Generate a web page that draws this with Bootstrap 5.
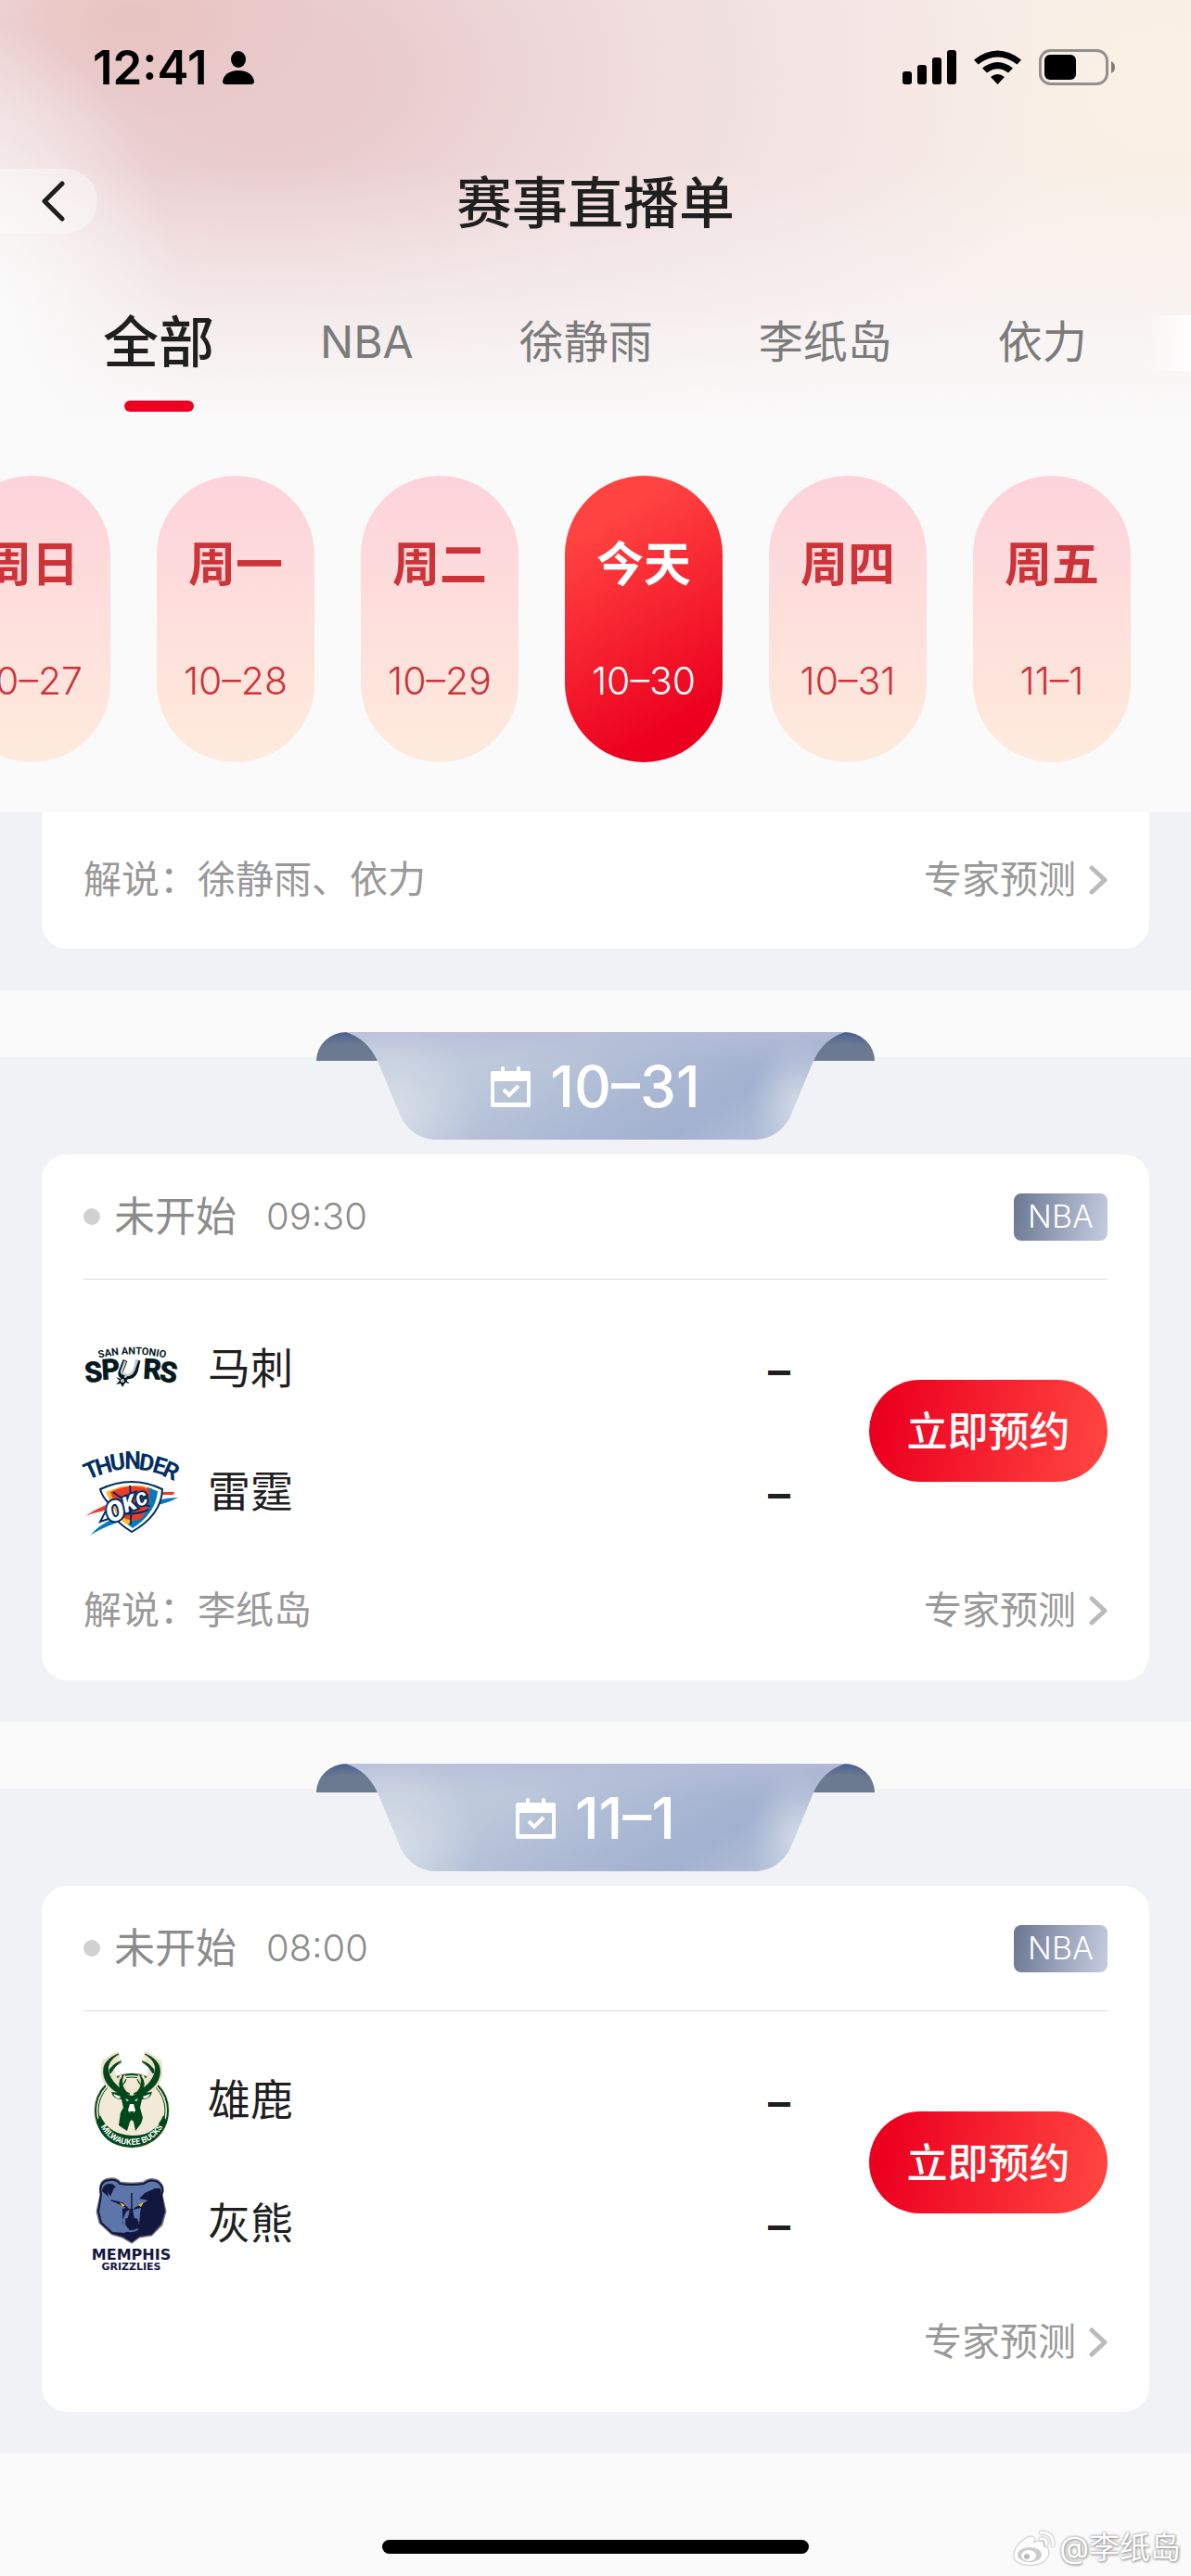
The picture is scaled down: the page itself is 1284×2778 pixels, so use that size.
<!DOCTYPE html>
<html lang="zh-CN">
<head>
<meta charset="utf-8">
<meta name="viewport" content="width=device-width, initial-scale=1">
<title>赛事直播单</title>
<link rel="stylesheet" href="https://cdn.jsdelivr.net/npm/bootstrap@5.3.0/dist/css/bootstrap.min.css">
<style>
  body { background: #fafafa; color: #1f1f1f; font-family: Inter, "Noto Sans CJK SC", sans-serif; line-height: 1.2; }
  a { text-decoration: none; color: inherit; }
  .app-head {
    height: 445px;
    background:
      linear-gradient(to bottom, rgba(250,250,250,0) 40%, rgba(250,250,250,.4) 72%, rgba(250,250,250,.9) 100%),
      radial-gradient(ellipse 20% 85% at -4% 88%, #fafafa 25%, rgba(250,250,250,0) 100%),
      radial-gradient(ellipse 16% 26% at 11% 4%, rgba(232,194,190,.9), rgba(232,194,190,0)),
      radial-gradient(ellipse 66% 125% at 22% 18%, #e9cbcd 14%, rgba(238,216,217,.75) 48%, rgba(246,236,234,0) 100%),
      radial-gradient(ellipse 34% 80% at 98% 22%, #faf0e4 10%, rgba(250,243,235,0) 100%),
      #f6eceb;
  }
  .status-row { height: 146px; padding: 0 82px 0 100px; color: #000; }
  .clock { font-size: 51px; font-weight: 600; }
  .title-row { height: 145px; }
  .title-row h1 { font-size: 60px; font-weight: 500; }
  .back-btn { width: 105px; height: 70px; border-radius: 0 35px 35px 0; background: rgba(255,255,255,.38); padding-left: 43px; left: 0; top: 36px; }
  .tab-row { height: 154px; padding: 0 54px; font-size: 48px; color: #7b7b7b; }
  .tab-row a { padding: 0 57px; height: 156px; }
  .tab-row .now { font-size: 60px; font-weight: 500; color: #1f1f1f; }
  .tab-row .now::after { content: ""; position: absolute; width: 75px; height: 12px; border-radius: 6px; background: #ee0022; left: calc(50% - 37px); bottom: 3px; }
  .tab-fade { width: 48px; height: 60px; right: 0; top: 49px; background: linear-gradient(to right, rgba(255,255,255,0), #fff); }
  .day-row { padding: 68px 0 54px; gap: 50px; margin-left: -51px; }
  .day { width: 170px; height: 309px; border: 0; border-radius: 85px; padding: 65px 0 0; gap: 71px; background: linear-gradient(#fdd3db, #feebdc); color: #cd3439; }
  .day b { font-size: 51px; font-weight: 700; }
  .day span { font-size: 41px; font-weight: 300; }
  .day.today { background: linear-gradient(150deg, #ff4340 18%, #ec001f 84%); color: #fff; }
  .grey-band { background: #f1f2f6; padding: 0 45px 45px; }
  .match-day { background: linear-gradient(#fafafa 72px, #f1f2f6 72px); padding: 45px; }
  .ribbon { width: 602px; height: 116px; margin-bottom: 16px; gap: 21px; padding-top: 2px; color: #fff; font-size: 62px; font-weight: 500; }
  .ribbon .shape { position: absolute; inset: 0; }
  .game { background: #fff; border-radius: 27px; padding: 0 45px; }
  .game.cut { border-radius: 0 0 27px 27px; padding-bottom: 4px; }
  .game-top { height: 135px; border-bottom: 1px solid #dedede; font-size: 44px; color: #8c8c8c; }
  .dot { width: 18px; height: 18px; background: #d1d1d1; margin-right: 15px; }
  .time { margin-left: 32px; font-size: 40px; font-weight: 300; }
  .league { width: 101px; height: 51px; border-radius: 8px; background: linear-gradient(100deg, #6a7792, #c5cde0); color: #fff; font-size: 34px; font-weight: 300; }
  .game-mid { padding-top: 45px; }
  .team { height: 102px; font-size: 46px; gap: 32px; }
  .team svg { overflow: visible; }
  .score { font-weight: 600; font-size: 48px; padding-top: 4px; }
  .teams { gap: 31px; }
  .book { width: 257px; height: 110px; margin-left: 85px; padding-top: 4px; border: 0; border-radius: 55px; background: linear-gradient(100deg, #ec001f 8%, #ff4340 94%); color: #fff; font-size: 44px; font-weight: 500; }
  .game-foot { height: 152px; padding-top: 2px; font-size: 41px; color: #999; }
  .cut .game-foot { height: 143px; }
  .game-foot a { gap: 14px; }
  .home { padding: 93px 0 24px; }
  .home-bar { width: 460px; height: 15px; background: #000; border-radius: 8px; }
  .mark-by { right: 11px; bottom: 10px; font-size: 33px; gap: 4px; color: #fff; text-shadow: 0 0 3px #888, 1px 1px 3px #999; }
  .mark-by svg { filter: drop-shadow(0 0 1px #888); }
</style>
</head>
<body>
<svg width="0" height="0" class="position-absolute" aria-hidden="true">
  <defs>
    <linearGradient id="gRib" x1="0" y1="0" x2="1" y2=".3">
      <stop offset="0" stop-color="#cbd3e1"/><stop offset=".4" stop-color="#bcc8da"/><stop offset=".7" stop-color="#a9b7d3"/><stop offset=".85" stop-color="#a2b1cf"/><stop offset="1" stop-color="#b0bdd8"/>
    </linearGradient>
    <linearGradient id="gTop" x1="0" y1="0" x2="0" y2="1"><stop offset="0" stop-color="#b6bcd8" stop-opacity=".75"/><stop offset=".3" stop-color="#b6bcd8" stop-opacity="0"/></linearGradient>
    <radialGradient id="gGlow"><stop offset="0" stop-color="#dde3eb" stop-opacity=".8"/><stop offset=".5" stop-color="#dde3eb" stop-opacity=".35"/><stop offset="1" stop-color="#dde3eb" stop-opacity="0"/></radialGradient>
    <radialGradient id="gEar" cx=".5" cy="1" r="1"><stop offset=".6" stop-color="#6b7a90"/><stop offset="1" stop-color="#4a5f91"/></radialGradient>
    <clipPath id="cRib"><path d="M32 0H570C555 5 544 14 536 31L510 93Q498 114 475 116H127Q104 114 92 93L66 31C58 14 47 5 32 0Z"/></clipPath>
  </defs>
  <symbol id="ribbon" viewBox="0 0 602 116">
    <path d="M0 31A33 31 0 0 1 66 31Z" fill="url(#gEar)"/><path d="M536 31A33 31 0 0 1 602 31Z" fill="url(#gEar)"/>
    <g clip-path="url(#cRib)"><rect width="602" height="116" fill="url(#gRib)"/><rect width="602" height="116" fill="url(#gTop)"/><ellipse cx="85" cy="85" rx="90" ry="90" fill="url(#gGlow)"/><ellipse cx="520" cy="80" rx="52" ry="75" fill="url(#gGlow)"/></g>
  </symbol>
  <symbol id="cal" viewBox="0 0 43 44">
    <path fill="#fff" fill-rule="evenodd" d="M2 5H11V1Q13 -1 15 1V5H28V1Q30 -1 32 1V5H41Q43 5 43 7V42Q43 44 41 44H2Q0 44 0 42V7Q0 5 2 5ZM4 16V39H39V16Z"/>
    <path d="M14 25L20 31L30 21" fill="none" stroke="#fff" stroke-width="4"/>
  </symbol>
  <symbol id="more" viewBox="0 0 20 32"><path d="M3 3L17 16L3 29" fill="none" stroke="#bbb" stroke-width="5" stroke-linecap="round" stroke-linejoin="round"/></symbol>
</svg>

<header class="app-head">
  <div class="status-row d-flex align-items-center justify-content-between">
    <div class="d-flex align-items-center gap-3"><span class="clock">12:41</span>
      <svg width="34" height="36" viewBox="0 0 34 36"><ellipse cx="17" cy="9" rx="8" ry="9"/><path d="M0 33C1 25 8 21 17 21S33 25 34 33Q34 36 30 36H4Q0 36 0 33Z"/></svg>
    </div>
    <div class="d-flex align-items-center">
      <svg width="229" height="40" viewBox="0 0 229 40">
        <rect x="0" y="24" width="10" height="14" rx="3"/><rect x="16" y="17" width="10" height="21" rx="3"/><rect x="32" y="9" width="10" height="29" rx="3"/><rect x="48" y="1" width="10" height="37" rx="3"/>
        <path d="M77 11.500Q102.500 -8.500 128 11.500L123.500 16.500Q102.500 .5 81.500 16.500Z"/><path d="M86 20.500Q102.500 7.500 119 20.500L114 25.500Q102.500 17 91 25.500Z"/><path d="M95 30Q102.500 24 110 30L102.500 38Z"/>
        <rect x="148.500" y="1.500" width="72" height="36" rx="11" fill="none" stroke="#958f8a" stroke-width="3"/><rect x="153" y="6" width="34" height="27" rx="6"/><path d="M225 13Q229 15 229 19.500T225 26Z" fill="#827c78"/>
      </svg>
    </div>
  </div>
  <div class="title-row position-relative d-flex align-items-center justify-content-center">
    <button class="btn back-btn position-absolute d-flex align-items-center" aria-label="返回"><svg width="26" height="44" viewBox="0 0 26 44"><path d="M23 3L4 22L23 41" fill="none" stroke="#1f1f1f" stroke-width="5" stroke-linecap="round" stroke-linejoin="round"/></svg></button>
    <h1 class="m-0">赛事直播单</h1>
  </div>
  <nav class="tab-row position-relative d-flex text-nowrap overflow-hidden">
    <a href="#all" class="now position-relative d-flex align-items-center">全部</a>
    <a href="#nba" class="d-flex align-items-center">NBA</a>
    <a href="#xjy" class="d-flex align-items-center">徐静雨</a>
    <a href="#lzd" class="d-flex align-items-center">李纸岛</a>
    <a href="#yl" class="d-flex align-items-center">依力</a>
    <div class="tab-fade position-absolute"></div>
  </nav>
</header>

<div class="overflow-hidden">
  <div class="day-row d-flex">
    <button class="day flex-shrink-0 d-flex flex-column align-items-center"><b>周日</b><span>10–27</span></button>
    <button class="day flex-shrink-0 d-flex flex-column align-items-center"><b>周一</b><span>10–28</span></button>
    <button class="day flex-shrink-0 d-flex flex-column align-items-center"><b>周二</b><span>10–29</span></button>
    <button class="day today flex-shrink-0 d-flex flex-column align-items-center"><b>今天</b><span>10–30</span></button>
    <button class="day flex-shrink-0 d-flex flex-column align-items-center"><b>周四</b><span>10–31</span></button>
    <button class="day flex-shrink-0 d-flex flex-column align-items-center"><b>周五</b><span>11–1</span></button>
  </div>
</div>

<main>
  <section class="grey-band">
    <article class="game cut">
      <div class="game-foot d-flex align-items-center justify-content-between"><span>解说：徐静雨、依力</span><a href="#p0" class="d-flex align-items-center">专家预测 <svg width="20" height="32"><use href="#more"/></svg></a></div>
    </article>
  </section>

  <section class="match-day">
    <h2 class="ribbon position-relative mx-auto mt-0 d-flex align-items-center justify-content-center">
      <svg class="shape" width="602" height="116"><use href="#ribbon"/></svg>
      <svg class="position-relative" width="43" height="44"><use href="#cal"/></svg><span class="position-relative">10–31</span>
    </h2>
    <article class="game">
      <div class="game-top d-flex align-items-center"><i class="dot rounded-circle"></i><span>未开始</span><time class="time">09:30</time><span class="league ms-auto d-flex align-items-center justify-content-center">NBA</span></div>
      <div class="game-mid d-flex align-items-center">
        <div class="teams flex-grow-1 d-flex flex-column">
          <div class="team d-flex align-items-center">
            <svg width="102" height="102" viewBox="0 0 102 102" fill="#06191f" font-family="Roboto, sans-serif" font-weight="700">
              <path id="spA" d="M15 40Q52 31 90 40" fill="none"/><text font-size="11"><textPath href="#spA" startOffset="50%" text-anchor="middle">SAN ANTONIO</textPath></text>
              <g font-size="30" stroke="#06191f" stroke-width="1"><text x="2" y="65" transform="rotate(-6 12 60)">S</text><text x="20" y="62" transform="rotate(-3 28 60)">P</text><text x="64" y="62" transform="rotate(3 74 60)">R</text><text x="82" y="65" transform="rotate(6 90 60)">S</text></g>
              <path d="M45 42L40 55Q39 60 46 60L44 64M59 42L56 54Q54 60 46 60" fill="none" stroke="#06191f" stroke-width="5"/>
              <path d="M45 43L41 54Q41 57 46 57M58 42L54 53Q52 58 46 58L43 66" fill="none" stroke="#c5ced2" stroke-width="2.500"/>
              <path d="M42 57L44 61L49 60L46 64L50 67L45 66L42 71L40 67L35 68L39 64L35 60L40 62Z"/><circle cx="42" cy="64" r="2" fill="#c5ced2"/>
            </svg><span>马刺</span><span class="score ms-auto">–</span>
          </div>
          <div class="team d-flex align-items-center">
            <svg width="102" height="102" viewBox="0 0 102 102">
              <path d="M2 77Q12 70 24 65L23 71Q12 73 2 77ZM82 51H98L97 54H81Z" fill="#ef3b24"/>
              <path d="M7 98Q17 86 32 80L36 84Q17 91 7 98ZM102 57Q91 57 80 60L79 65Q91 63 102 57Z" fill="#007ac1"/>
              <path d="M18 48Q52 32 85 48Q84 76 52 94Q38 85 33 78L18 83L28 64Q20 56 18 48Z" fill="#fff" stroke="#002d62" stroke-width="2"/>
              <path d="M24 51Q52 39 74 47L72 70Q62 86 50 88Q40 82 36 76Z" fill="#fdb930"/>
              <path d="M69 46L80 50Q78 74 53 90L48 86Q68 72 69 46Z" fill="#007ac1"/>
              <path d="M29 51Q52 40 71 48Q74 70 60 81Q45 84 37 73Z" fill="#ef3b24"/>
              <path d="M50 44Q52 62 51 86M32 51Q48 65 72 66M41 74Q58 76 70 70" stroke="#002d62" stroke-width="2" fill="none"/>
              <g transform="rotate(-22 48 66)" font-family="Roboto,sans-serif" font-style="italic" font-weight="900" fill="#fff" stroke="#002d62" stroke-width="4" paint-order="stroke"><text x="23" y="76" font-size="30">O</text><text x="43" y="72" font-size="23">K</text><text x="58" y="71" font-size="19">C</text></g>
              <g font-family="Roboto, sans-serif" font-weight="700" font-size="25" fill="#002d62" text-anchor="middle">
                <text x="12" y="35" transform="rotate(-24 12 35)">T</text><text x="24" y="31" transform="rotate(-16 24 31)">H</text><text x="38" y="27" transform="rotate(-8 38 27)">U</text><text x="53" y="26">N</text><text x="67" y="28" transform="rotate(8 67 28)">D</text><text x="80" y="31" transform="rotate(16 80 31)">E</text><text x="91" y="36" transform="rotate(24 91 36)">R</text>
              </g>
            </svg><span>雷霆</span><span class="score ms-auto">–</span>
          </div>
        </div>
        <button class="book">立即预约</button>
      </div>
      <div class="game-foot d-flex align-items-center justify-content-between"><span>解说：李纸岛</span><a href="#p1" class="d-flex align-items-center">专家预测 <svg width="20" height="32"><use href="#more"/></svg></a></div>
    </article>
  </section>

  <section class="match-day">
    <h2 class="ribbon position-relative mx-auto mt-0 d-flex align-items-center justify-content-center">
      <svg class="shape" width="602" height="116"><use href="#ribbon"/></svg>
      <svg class="position-relative" width="43" height="44"><use href="#cal"/></svg><span class="position-relative">11–1</span>
    </h2>
    <article class="game">
      <div class="game-top d-flex align-items-center"><i class="dot rounded-circle"></i><span>未开始</span><time class="time">08:00</time><span class="league ms-auto d-flex align-items-center justify-content-center">NBA</span></div>
      <div class="game-mid d-flex align-items-center">
        <div class="teams flex-grow-1 d-flex flex-column">
          <div class="team d-flex align-items-center">
            <svg width="102" height="102" viewBox="0 -2 102 102">
              <circle cx="52" cy="60" r="41" fill="#eee1c6"/><circle cx="52" cy="60" r="39" fill="#f1ead6" stroke="#00471b" stroke-width="2"/><circle cx="52" cy="60" r="36" fill="none" stroke="#00471b" stroke-width="1"/>
              <g id="antler"><path d="M41 43C29 37 20 28 22 14C23 8 29 2 38 -1C32 4 29 10 31 18C33 28 39 36 50 41M22 24Q21 13 24 5M30 13Q35 8 41 7M41 38Q36 31 42 23M42 33Q45 27 42 23" fill="none" stroke="#eee1c6" stroke-width="6"/><path d="M41 43C29 37 20 28 22 14C23 8 29 2 38 -1C30 4 25 10 27 18C29 28 37 36 50 42ZM28 16Q34 8 41 7Q34 11 29 20ZM42 40Q35 31 43 22Q39 32 46 40ZM41 33Q45 31 46 26" fill="#00471b" stroke="#00471b" stroke-width="1"/></g>
              <use href="#antler" transform="translate(104 0) scale(-1 1)"/>
              <path d="M41 41L52 44L63 41L74 40Q72 48 63 48L61 57L64 68L62 74L56 82L54 72L52 70L50 72L47 82L38 76L40 62L43 57L41 48Q32 48 30 40Z" fill="#00471b"/>
              <path d="M32 42L40 45L39 47Q34 47 32 42ZM72 42L64 45L65 47Q70 47 72 42ZM45 47L49 49L47 50ZM59 47L55 49L57 50ZM50 53H54L56 60L54 63H50L48 60Z" fill="#fff"/><path d="M49 61H55L52 65Z" fill="#00471b"/>
              <path d="M18 65Q27 86 52 87T86 65L90 72Q82 98 52 99T14 72Z" fill="#00471b"/>
              <path id="mbA" d="M15 70Q26 97 52 97T89 70" fill="none"/><text font-family="Roboto, sans-serif" font-weight="700" font-size="9" fill="#fff"><textPath href="#mbA" startOffset="50%" text-anchor="middle">MILWAUKEE BUCKS</textPath></text>
            </svg><span>雄鹿</span><span class="score ms-auto">–</span>
          </div>
          <div class="team d-flex align-items-center">
            <svg width="102" height="102" viewBox="0 0 102 102">
              <path d="M19 20Q16 4 28 3Q36 2 39 7Q52 9 65 7Q72 1 80 5Q88 11 84 20L88 38L84 52L73 63L60 65L52 71L42 65L31 62L18 50L15 38Z" fill="#5d76a9" stroke="#73787e" stroke-width="3"/>
              <path d="M19 20Q16 5 28 4Q36 3 39 8Q52 10 65 8Q72 2 80 6Q88 12 84 20L87 38L83 51L73 62L60 64L52 70L42 64L31 61L19 50L16 38Z" fill="#5d76a9" stroke="#12173f" stroke-width="2"/>
              <path d="M84 20L87 38L83 51L73 62L60 64L52 70L42 64L31 60L45 61L46 57L42 50V35L46 34L50 35H55L61 31L70 26L60 24L66 18L77 13H83ZM20 16Q21 8 28 8Q33 8 35 12L30 13L26 17L27 22Z" fill="#12173f"/>
              <path d="M53 36L62 34L61 40L60 52L55 46ZM45 60L42 47L46 38L50 36L47 48L49 58Z" fill="#5d76a9"/>
              <path d="M27 17Q29 13 32 13L29 20ZM52 18V35M30 26L42 29L48 35M74 25L60 32L55 35M46 46H57L59 50L53 55H48L46 52Z" fill="#12173f" stroke="#12173f" stroke-width="1.500"/><path d="M44 58Q52 61 59 57" fill="none" stroke="#5d76a9" stroke-width="2"/>
              <path d="M39 28L45 31L42 33ZM65 28L59 31L62 33Z" fill="#fdb927"/>
              <text x="51.500" y="90" text-anchor="middle" font-family="DejaVu Sans, sans-serif" font-weight="700" font-size="16" fill="#12173f">MEMPHIS</text>
              <text x="51.500" y="101" text-anchor="middle" font-family="DejaVu Sans, sans-serif" font-weight="700" font-size="11" fill="#12173f">GRIZZLIES</text>
            </svg><span>灰熊</span><span class="score ms-auto">–</span>
          </div>
        </div>
        <button class="book">立即预约</button>
      </div>
      <div class="game-foot d-flex align-items-center justify-content-end"><a href="#p2" class="d-flex align-items-center">专家预测 <svg width="20" height="32"><use href="#more"/></svg></a></div>
    </article>
  </section>
</main>

<footer class="home position-relative">
  <div class="home-bar mx-auto"></div>
  <div class="mark-by position-absolute d-flex align-items-center">
    <svg width="46" height="38" viewBox="0 0 46 38"><path d="M20 7Q25 6 22 13Q34 9 33 17Q40 19 38 26Q34 37 18 37Q1 36 1 26Q4 14 15 8Q18 6 20 7Z" fill="#fff"/><ellipse cx="18" cy="26" rx="13" ry="8" fill="#ccc"/><ellipse cx="17" cy="27" rx="8" ry="6" fill="#fff"/><circle cx="15" cy="28" r="3" fill="#bbb"/><path d="M30 2Q44 2 43 16M30 9Q37 8 36 15" fill="none" stroke="#fff" stroke-width="3" stroke-linecap="round"/></svg>
    <span>@李纸岛</span>
  </div>
</footer>
<script src="https://cdn.jsdelivr.net/npm/bootstrap@5.3.0/dist/js/bootstrap.bundle.min.js"></script>
</body>
</html>
